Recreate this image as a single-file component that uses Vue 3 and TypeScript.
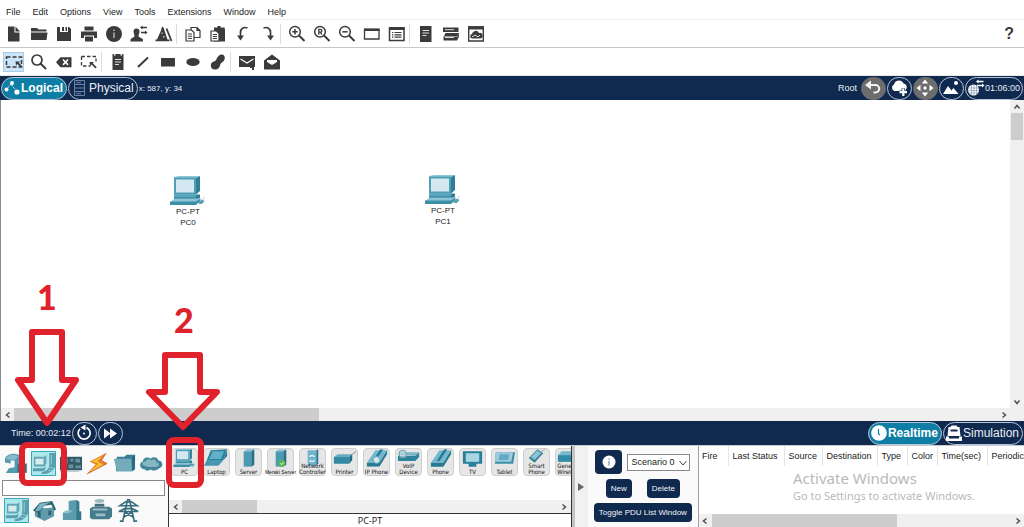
<script setup lang="ts">
import { ref } from 'vue'

interface Device {
  id: string
  icon: string
  lines: string[]
}

interface CanvasNode {
  name: string
  model: string
  x: number
  y: number
}

const menus: string[] = ['File', 'Edit', 'Options', 'View', 'Tools', 'Extensions', 'Window', 'Help']

const mainTools: string[][] = [
  ['new', 'open', 'save', 'print', 'info', 'user', 'wizard'],
  ['copy', 'paste', 'undo', 'redo'],
  ['zoom-in', 'zoom-reset', 'zoom-out', 'window', 'list'],
  ['server', 'devices', 'cloud-window'],
]

const drawTools: string[][] = [
  ['select', 'search', 'delete', 'resize'],
  ['note', 'line', 'rect', 'ellipse', 'freeform'],
  ['simple-pdu', 'complex-pdu'],
]

const nodes: CanvasNode[] = [
  { name: 'PC0', model: 'PC-PT', x: 169, y: 76 },
  { name: 'PC1', model: 'PC-PT', x: 424, y: 75 },
]

const categories: string[] = ['network', 'enddev', 'components', 'bolt', 'folder', 'cloud']
const subcategories: string[] = ['enddev', 'home', 'city', 'industrial', 'grid']

const devices: Device[] = [
  { id: 'pc', icon: 'pc', lines: ['PC'] },
  { id: 'laptop', icon: 'laptop', lines: ['Laptop'] },
  { id: 'server', icon: 'tower', lines: ['Server'] },
  { id: 'meraki', icon: 'meraki', lines: ['Meraki Server'] },
  { id: 'controller', icon: 'controller', lines: ['Network', 'Controller'] },
  { id: 'printer', icon: 'printer', lines: ['Printer'] },
  { id: 'ipphone', icon: 'ipphone', lines: ['IP Phone'] },
  { id: 'voip', icon: 'voip', lines: ['VoIP', 'Device'] },
  { id: 'phone', icon: 'phone', lines: ['Phone'] },
  { id: 'tv', icon: 'tv', lines: ['TV'] },
  { id: 'tablet', icon: 'tablet', lines: ['Tablet'] },
  { id: 'smart', icon: 'smart', lines: ['Smart', 'Phone'] },
  { id: 'generic', icon: 'generic', lines: ['Generic', 'Wireless'] },
]

const columns: { label: string; cls: string }[] = [
  { label: 'Fire', cls: 'c-fire' },
  { label: 'Last Status', cls: 'c-status' },
  { label: 'Source', cls: 'c-source' },
  { label: 'Destination', cls: 'c-dest' },
  { label: 'Type', cls: 'c-type' },
  { label: 'Color', cls: 'c-color' },
  { label: 'Time(sec)', cls: 'c-time' },
  { label: 'Periodic', cls: 'c-periodic' },
]

const drawTool = ref('select')
const query = ref('')
const scenario = ref('Scenario 0')
</script>

<template>
  <div class="app">
    <svg class="sprite" aria-hidden="true">
      <defs>
        <!-- toolbar glyphs -->
        <symbol id="new" viewBox="0 0 18 18"><path fill="currentColor" d="M3 1.500h6.500v6h5v9h-11.500zM10.500 1.500l4.500 5h-4.500z" /></symbol>
        <symbol id="open" viewBox="0 0 18 18"><path fill="currentColor" d="M1 3h6l1.500 1.500h8v2h-15.500zM1 7.500h16.500l-1 7.500h-15.500z" /></symbol>
        <symbol id="save" viewBox="0 0 18 18"><path fill="currentColor" d="M2 2h3v5h8v-5h1l2 2v12h-14z" /><path fill="currentColor" d="M7 2h2v4h-2zM10.500 2h1.500v4h-1.500z" /></symbol>
        <symbol id="print" viewBox="0 0 18 18"><path fill="currentColor" d="M4.500 1.500h9v4h-9zM1 6.500h16v6.500h-3v-2.500h-10v2.500h-3zM5 11.500h8v5h-8z" /></symbol>
        <symbol id="info" viewBox="0 0 18 18"><circle cx="9" cy="9" r="8" fill="currentColor" /><path fill="#aaa" d="M8.200 4.500h1.600v1.600h-1.600zM8.200 7.500h1.600v5.500h-1.600z" /></symbol>
        <symbol id="user" viewBox="0 0 18 18"><path fill="currentColor" d="M3.500 6.500a3 3 0 0 1 6 0c0 2-1 3-1 4.500 0 1.500 4 2 4.500 3.500v2h-12.500v-2c.5-1.500 4-2 4-3.500 0-1.500-1-2.500-1-4.500zM10 2.500l2.500-2v1.200h4.500v1.500h-4.500v1.200zM17.500 7.500l-2.500-2v1.200h-4v1.500h4v1.200z" /></symbol>
        <symbol id="wizard" viewBox="0 0 18 18"><path fill="currentColor" d="M7 1.500l1.500 1 1 3 3 9h2v1.800h-14v-1.800h1.500l4-9z" /><path stroke="currentColor" stroke-width="1.800" d="M11.500 3.500l5 12.500" /><path fill="#ccc" d="M6.500 7.500h1.200v1.400h-1.200zM8 11h1.500v1.500h-1.500z" /></symbol>
        <symbol id="copy" viewBox="0 0 18 18"><path fill="#fff" stroke="currentColor" stroke-width="1.200" d="M7 2.500h6l3 3v7h-9zM13 2.500v3h3" /><path fill="#fff" stroke="currentColor" stroke-width="1.200" d="M2 5h5.500l2.500 2.500v8.500h-8z" /><path stroke="currentColor" d="M3.800 9h4.200M3.800 11.200h4.200M3.800 13.400h4.200" /></symbol>
        <symbol id="paste" viewBox="0 0 18 18"><path fill="currentColor" d="M5 2.500h3.500v-1.500h3v1.500h4l.5 2v12h-11z" /><path fill="#fff" stroke="currentColor" stroke-width="1.200" d="M2 6h5.500l2.500 2.500v7.500h-8z" /><path stroke="currentColor" d="M3.800 9.500h4.200M3.800 11.500h4.200M3.800 13.500h4.200" /></symbol>
        <symbol id="undo" viewBox="0 0 18 18"><path fill="none" stroke="currentColor" stroke-width="1.700" d="M13.500 3c-4-1.500-7 .5-7 4.500v5" /><path fill="currentColor" d="M3 10.500h7l-3.500 5z" /></symbol>
        <symbol id="redo" viewBox="0 0 18 18"><path fill="none" stroke="currentColor" stroke-width="1.700" d="M4.500 3c4-1.500 7 .5 7 4.500v5" /><path fill="currentColor" d="M8 10.500h7l-3.500 5z" /></symbol>
        <symbol id="lens" viewBox="0 0 18 18"><circle cx="7" cy="6.800" r="5.300" fill="none" stroke="currentColor" stroke-width="1.500" /><path stroke="currentColor" stroke-width="1.900" d="M11 10.500l5.500 5.500" /></symbol>
        <symbol id="zoom-in" viewBox="0 0 18 18"><use href="#lens" /><path stroke="currentColor" stroke-width="1.500" d="M4.300 6.800h5.400M7 4.100v5.400" /></symbol>
        <symbol id="zoom-reset" viewBox="0 0 18 18"><use href="#lens" /><path fill="none" stroke="currentColor" stroke-width="1.300" d="M5.800 9.800v-5.500h1.700a1.300 1.300 0 0 1 0 2.800h-1.700M7.300 7l1.500 2.600" /></symbol>
        <symbol id="zoom-out" viewBox="0 0 18 18"><use href="#lens" /><path stroke="currentColor" stroke-width="1.500" d="M4.300 6.800h5.400" /></symbol>
        <symbol id="window" viewBox="0 0 18 18"><path fill="none" stroke="currentColor" stroke-width="1.300" d="M1.500 4.500h14.500v9.500h-14.500z" /><path fill="currentColor" d="M1 3.500h15.500v2.500h-15.500z" /></symbol>
        <symbol id="list" viewBox="0 0 18 18"><path fill="none" stroke="currentColor" stroke-width="1.500" d="M1.500 3h14.500v12.500h-14.500z" /><path fill="currentColor" d="M1 2h15.500v3h-15.500z" /><path stroke="currentColor" stroke-width="1.200" d="M4 7.500h1.300M6.500 7.500h7M4 9.800h1.300M6.500 9.800h7M4 12.100h1.300M6.500 12.100h7" /></symbol>
        <symbol id="server" viewBox="0 0 18 18"><path fill="currentColor" d="M3 1h11.500v16h-11.500z" /><path stroke="#ddd" stroke-width="1.200" d="M5.500 5.500h6.500M5.500 8h6.500M5.500 10.500h4" /></symbol>
        <symbol id="devices" viewBox="0 0 18 18"><path fill="currentColor" d="M1 2.500h15.500v4.500h-15.500zM3.500 8h13.500l-1.500 3h-13.500zM1.500 11.500h14l1.500-3v3l-2 4h-13.500z" /><path stroke="#ddd" d="M3 4.700h9M3 12.500h9" /></symbol>
        <symbol id="cloud-window" viewBox="0 0 18 18"><path fill="none" stroke="currentColor" stroke-width="1.400" d="M1.700 2h14.600v14h-14.600z" /><path fill="currentColor" d="M1 1.300h16v3.200h-16zM5 13.500a2.300 2.300 0 0 1 0-4.500 3.700 3.700 0 0 1 7-1 2.800 2.800 0 0 1 1.500 5.500z" /><path fill="none" stroke="#ddd" d="M5 12l3-2 3 2 2-2" /></symbol>
        <symbol id="select" viewBox="0 0 18 18"><path fill="none" stroke="currentColor" stroke-width="1.500" stroke-dasharray="4 2" d="M1.500 4h15v10h-15z" /><path fill="currentColor" d="M10.500 8.500h4.500l-1.300 1.300 3 3-1.200 1.200-3-3-1.500 1.500z" /></symbol>
        <symbol id="search" viewBox="0 0 18 18"><circle cx="7" cy="7" r="5" fill="none" stroke="currentColor" stroke-width="1.700" /><path stroke="currentColor" stroke-width="2" d="M10.500 10.500l5.500 5.500" /></symbol>
        <symbol id="delete" viewBox="0 0 18 18"><path fill="currentColor" d="M1 9.200l4.500-5h11v10h-11z" /><path stroke="#fff" stroke-width="1.600" d="M8 6.500l5 5.400M13 6.500l-5 5.400" /></symbol>
        <symbol id="resize" viewBox="0 0 18 18"><path fill="none" stroke="currentColor" stroke-width="1.300" stroke-dasharray="3.500 2" d="M1.500 3.500h14.500v5M1.500 3.500v9.500h9" /><path fill="currentColor" d="M9.500 9h4.500l-1.300 1.300 4 4-1.200 1.200-4-4-1.500 1.500z" /></symbol>
        <symbol id="note" viewBox="0 0 18 18"><path fill="currentColor" d="M3.500 1h1.500v1.500h1.500v-1.500h5v1.500h1.500v-1.500h1.500v16h-11z" /><path stroke="#ddd" stroke-width="1.200" d="M6 6.500h6M6 9h6M6 11.500h4" /></symbol>
        <symbol id="line" viewBox="0 0 18 18"><path stroke="currentColor" stroke-width="2" d="M4 14l10-9.500" /></symbol>
        <symbol id="rect" viewBox="0 0 18 18"><path fill="currentColor" d="M2 5h14v8.500h-14z" /></symbol>
        <symbol id="ellipse" viewBox="0 0 18 18"><ellipse cx="9" cy="9" rx="6.700" ry="4" fill="currentColor" /></symbol>
        <symbol id="freeform" viewBox="0 0 18 18"><path fill="currentColor" d="M10 2.500c3-2.500 7 0 5.500 4-1 2.500-3 2.500-4 4.500-1 4-3 6-6 5.500-3.500-.5-4.500-4-3-6.500 1.500-2 3.500-1 4.500-3 1-1.500 1.500-3.500 3-4.500z" /></symbol>
        <symbol id="simple-pdu" viewBox="0 0 18 18"><path fill="currentColor" d="M1 3h16v11h-1v3h-2v-2h-2v-1h-11z" /><path fill="none" stroke="#fff" stroke-width="1.200" d="M2.500 6l6.500 4 6.500-4" /></symbol>
        <symbol id="complex-pdu" viewBox="0 0 18 18"><path fill="currentColor" d="M1 7.500l8-6 8 6v9h-16z" /><path fill="#fff" d="M4 7h10v2l-5 3-5-3z" /></symbol>

        <!-- white glyphs of the dark bars -->
        <symbol id="topology" viewBox="0 0 18 18"><path fill="none" stroke="#fff" stroke-dasharray="1.500 1.500" d="M3 11l5-6 6 8" /><circle cx="3.500" cy="10.500" r="2" fill="#fff" /><circle cx="9" cy="4" r="2" fill="#fff" /><circle cx="14" cy="13" r="2.600" fill="#fff" /></symbol>
        <symbol id="rack" viewBox="0 0 14 18"><path fill="none" stroke="#6d83a6" d="M1.500 1.500h10v15h-10zM1.500 5.500h10M1.500 9h10M1.500 12.500h10" /><path stroke="#526d94" stroke-width="1.500" d="M3 3.500h5M3 14.500h5" /></symbol>
        <symbol id="back" viewBox="0 0 18 18"><path fill="none" stroke="#f2f2f2" stroke-width="2" d="M5 6h6.500a3.600 3.600 0 0 1 0 7.500h-2" /><path fill="#f2f2f2" d="M1 6l6-4.500v9z" /></symbol>
        <symbol id="cloud-add" viewBox="0 0 18 18"><path fill="#fff" d="M4.500 12a3.500 3.500 0 0 1-.5-6.500 5 5 0 0 1 9.500-1 3.700 3.700 0 0 1 2 6.500v1z" /><path stroke="#112a51" stroke-width="3.400" d="M13.300 9.300v8M9.500 13.200h8" /><path stroke="#fff" stroke-width="2.200" d="M13.300 9.500v7.500M9.500 13.200h7.500" /></symbol>
        <symbol id="move" viewBox="0 0 18 18"><path fill="#fff" d="M9 .5l3.200 4h-6.400zM9 17.500l3.200-4h-6.400zM.5 9l4-3.200v6.400zM17.500 9l-4-3.200v6.400z" /><circle cx="9" cy="9" r="1.700" fill="#fff" /></symbol>
        <symbol id="mountains" viewBox="0 0 18 18"><path fill="#fff" d="M1 15l5-8 3.500 4.500 2-2.500 5 6z" /><circle cx="14" cy="4" r="2" fill="#fff" /></symbol>
        <symbol id="globe" viewBox="0 0 18 18"><circle cx="6.500" cy="11" r="5.500" fill="#fff" /><path fill="none" stroke="#7a8ba6" stroke-width=".6" d="M1 9h11M1 11.500h11M2 14h9M4.500 6v10M7 6v10M9.500 6v10" /><path fill="#fff" d="M9 2.500l2.500-2v1.200h5v1.500h-5v1.300zM17.500 6.500l-2.500-2v1.200h-5v1.500h5v1.300z" /></symbol>
        <symbol id="reset" viewBox="0 0 18 18"><path fill="none" stroke="#fff" stroke-width="1.700" d="M11.500 3.600a6 6 0 1 1-6.500 1.200" /><path fill="#fff" d="M5.500 3.600l5-3.100v6z" /><circle cx="9" cy="9.500" r="1" fill="#fff" /></symbol>
        <symbol id="forward" viewBox="0 0 18 18"><path fill="#fff" d="M3 4.500l6 4.500v-4.500l7 5-7 5v-4.500l-6 4.500z" /></symbol>
        <symbol id="clock" viewBox="0 0 18 18"><circle cx="9" cy="9" r="7.800" fill="#fff" /><path fill="none" stroke="#1280a6" stroke-width="1.200" d="M8.500 5v5l1.500 1" /></symbol>
        <symbol id="sim" viewBox="0 0 18 18"><path fill="#fff" d="M6.500 1.500h5l1 1.500h2l1 9h-13l1-9h2zM1 12.500h3v2h10v-2h3v4.500h-16z" /><path fill="#112a51" d="M5.500 5.500h7v2h-7z" /></symbol>
        <symbol id="info-white" viewBox="0 0 14 14"><circle cx="7" cy="7" r="6.500" fill="#fff" /><path fill="#8c9bb3" d="M6.300 3.500h1.400v1.400h-1.400zM6.300 6h1.400v4.500h-1.400z" /></symbol>

        <!-- device pictures -->
        <symbol id="pc" viewBox="0 0 36 29"><path fill="#8fc7d7" d="M4 1l5-1h21l-4 2h-22z" /><path fill="#2f7f97" d="M26 2l4-2v15l-4 3.500z" /><path fill="#4fa0b7" d="M4 1.500h22v17h-22z" /><path fill="#d3e8f0" d="M6 3.500h18v13h-18z" /><path fill="#2f7f97" d="M4 18.500h26v3.500l-4 2h-22z" /><path fill="#5aa7bd" d="M4 18.500h22v3h-22z" /><path fill="#8dc3d3" d="M4.500 22.500h26l-4.500 4h-26z" /><path fill="#3d8fa8" d="M0 25.500h26l4.500-3v2.500l-4.500 4h-26z" /><path fill="#5c9fb3" d="M29 26l3-2.500 2.500 1.500-2.500 3h-3z" /><path fill="none" stroke="#c5cdd1" stroke-width=".8" d="M33 24l1.500-3.500" /></symbol>
        <symbol id="laptop" viewBox="0 0 26 18"><path fill="#2b829c" d="M7 1l17-1-4 11h-17z" /><path fill="#62b0c8" d="M9 2h12l-3.500 8h-12z" /><path fill="#4698b1" d="M3 11h17l-5 6h-15z" /><path fill="#257189" d="M20 11l4-10v6l-9 10z" /></symbol>
        <symbol id="tower" viewBox="0 0 26 18"><path fill="#4a9ab2" d="M8 2h8v16h-8z" /><path fill="#86c2d4" d="M8 2l3-2h8l-3 2z" /><path fill="#266f86" d="M16 2l3-2v16l-3 2z" /></symbol>
        <symbol id="meraki" viewBox="0 0 26 18"><use href="#tower" /><circle cx="14.500" cy="14.500" r="3.500" fill="#5ab84b" /><path fill="none" stroke="#fff" d="M12.800 14.500l1.400 1.400 2.200-2.400" /></symbol>
        <symbol id="controller" viewBox="0 0 26 18"><path fill="#6fb4c9" d="M8 1h9v16h-9z" /><path fill="#287690" d="M17 1l2-1v15l-2 2z" /><path fill="none" stroke="#e5f3f7" stroke-width="1.500" d="M10 8a2.700 2.700 0 0 1 5 0M15 11a2.700 2.700 0 0 1-5 0" /></symbol>
        <symbol id="printer" viewBox="0 0 26 18"><path fill="#65acc2" d="M2 8l4-3h15l-3 3z" /><path fill="#348aa4" d="M2 8h16v7h-16z" /><path fill="#206b83" d="M18 8l3-3v6l-3 4z" /><path stroke="#777" stroke-width=".8" d="M19 7l6-5" /></symbol>
        <symbol id="phone" viewBox="0 0 26 18"><path fill="#73b8cc" d="M3 14l9-13h12l-8 13z" /><path fill="#277a94" d="M3 14h13l8-13v4l-8 13h-13zM9 12l8-12h3l-8 12z" /></symbol>
        <symbol id="ipphone" viewBox="0 0 26 18"><use href="#phone" /><circle cx="13" cy="11" r="3.500" fill="#d2e6ed" stroke="#579db2" stroke-width=".8" /></symbol>
        <symbol id="voip" viewBox="0 0 26 18"><path fill="#79b8ca" d="M2 6l4-3h18l-4 4z" /><path fill="#2d839c" d="M2 7h18l4-4v5l-4 4h-18z" /><circle cx="7" cy="5" r="4" fill="#bbd6df" fill-opacity=".7" stroke="#5e99aa" /></symbol>
        <symbol id="tv" viewBox="0 0 26 18"><path fill="#287f9a" d="M3 2h20v13h-20zM9 15h8v3h-8z" /><path fill="#a8d5e3" d="M6 4h14v9h-14z" /></symbol>
        <symbol id="tablet" viewBox="0 0 26 18"><path fill="#3b8fa9" d="M4 3h20l-2 12h-19z" /><path fill="#9bcbdc" d="M4 3h18l-2 10h-17z" /><path fill="#62aac3" d="M8 5h10l-1 6h-10z" /></symbol>
        <symbol id="smart" viewBox="0 0 26 18"><path fill="#318199" d="M5 9l9-9 6 4-9 10z" /><path fill="#8bc1d1" d="M7 8l7-7 4 3-7 7z" /><path stroke="#aaa" d="M18 2l4-2" /></symbol>
        <symbol id="generic" viewBox="0 0 26 18"><path fill="#74b9cd" d="M2 6l4-4h20v4z" /><path fill="#318ba7" d="M2 6h24v7h-24z" /></symbol>

        <!-- category pictures -->
        <symbol id="network" viewBox="0 0 26 26"><path fill="#539bb0" d="M1 8c2-6 13-7 17-2v7h6v10h-22l3-5 6-1v-7h-4v3l-6-1z" /><path fill="#86bccc" d="M2 8c3-5 10-5 13-2l-4 3h-6z" /><path fill="#316f84" d="M14 14h9v8h-9z" /></symbol>
        <symbol id="enddev" viewBox="0 0 26 26"><path fill="#aee8ec" stroke="#2ba6b4" d="M.5 .5h25v25h-25z" /><path fill="#65a5b6" d="M3 6h11l2-2v9l-2 3h-11z" /><path fill="#d5edf1" d="M4.500 8h8.500v6h-8.500z" /><path fill="#5b9dae" d="M2 18h11l2-2v3l-2 2h-11zM19 2h6v14c-3 6-7 8-14 8v-2c6-1 8-4 8-8z" /><path fill="none" stroke="#9dd3dc" d="M18 20l4 1M19 17l4 1M21 4v10" /></symbol>
        <symbol id="components" viewBox="0 0 26 26"><path fill="#335764" d="M2 6h23v14h-23z" /><path fill="#64929f" d="M4 8h6v5h-6zM13 8h3v3h-3zM18 8h5v4h-5zM11 14h5v4h-5zM18 15h6v3h-6z" /><path stroke="#9ab9c0" d="M4 16h5M2 21h20" /></symbol>
        <symbol id="bolt" viewBox="0 0 26 26"><path fill="#ef7d25" d="M22 2l-17 9 6 3-9 10 21-11-6-3z" /><path fill="#f4c531" d="M18 5l-11 6 7 2-9 9 14-8-6-3z" /><path fill="none" stroke="#b64726" stroke-width=".7" d="M22 2l-5 8 6 3-21 11" /></symbol>
        <symbol id="folder" viewBox="0 0 26 26"><path fill="#367f94" d="M5 6h8l2-2h9v15l-3 2h-17z" /><path fill="#73abba" d="M2 8h18l1 13h-16z" /><path fill="#22677e" d="M21 7l3-3-1 15-2 2z" /></symbol>
        <symbol id="cloud" viewBox="0 0 26 26"><path fill="#42869a" d="M6 19c-6 0-6-7-2-8 0-5 6-5 8-3 3-3 8-1 8 2 5 0 6 7 1 8-3 3-8 3-9 1-2 2-5 2-6 0z" /><path fill="#86b7c4" d="M5 15c-3-2-1-4 2-4 1-3 4-3 5-1 3-2 6-1 6 2 3 0 4 3 1 4-4 1-10 1-14-1z" /></symbol>
        <symbol id="home" viewBox="0 0 26 26"><path fill="#5f9bab" d="M3 13l4-2 16-1v9l-10 5-10-5z" /><path fill="#2f6476" d="M1 13l7-8 13-2 4 9-2 1-3-6-7 1-6 8zM6 14h3v6h-3zM17 13h3v5h-3z" /><path fill="#7fb4c2" d="M8 6l12-2-6 3-6 6-5 1z" /></symbol>
        <symbol id="city" viewBox="0 0 26 26"><path fill="#5b9bad" d="M9 3l8-1 3 2v10h2v9h-19v-8h6z" /><path fill="#34798d" d="M17 2l3 2v10h2v9h-5z" /><path fill="#8ebeca" d="M3 15l3-2h7l-2 2z" /></symbol>
        <symbol id="industrial" viewBox="0 0 26 26"><path fill="#447b8b" d="M2 11l3-2h17l3 2v8l-3 3h-18l-2-2z" /><path fill="#9dbdc5" d="M5 11h15v2h-15zM8 16h10v3h-10z" /><ellipse cx="12" cy="3" rx="5" ry="2" fill="#9bb9c0" /><path fill="#426e7b" d="M7 6h10v3h-10z" /></symbol>
        <symbol id="grid" viewBox="0 0 26 26"><path fill="none" stroke="#386d7e" stroke-width="1.700" d="M7 24l5-22h2l5 22M4 8h18l-6-4h-6zM3 14h20l-6-3h-8zM8 20l9-6M18 20l-9-6M4 24h4M18 24h4" /></symbol>

        <!-- scroll arrows -->
        <symbol id="left" viewBox="0 0 8 8"><path fill="none" stroke="#505050" stroke-width="1.500" d="M5.500 1.500l-3 2.500 3 2.500" /></symbol>
        <symbol id="right" viewBox="0 0 8 8"><path fill="none" stroke="#505050" stroke-width="1.500" d="M2.500 1.500l3 2.500-3 2.500" /></symbol>
        <symbol id="up" viewBox="0 0 8 8"><path fill="none" stroke="#505050" stroke-width="1.500" d="M1.500 5.500l2.500-3 2.500 3" /></symbol>
        <symbol id="down" viewBox="0 0 8 8"><path fill="none" stroke="#505050" stroke-width="1.500" d="M1.500 2.500l2.500 3 2.500-3" /></symbol>
      </defs>
    </svg>

    <nav class="menubar" aria-label="Menu">
      <button v-for="m in menus" :key="m" type="button" class="menu">{{ m }}</button>
    </nav>

    <div class="toolbar" role="toolbar" aria-label="Main">
      <div v-for="(group, gi) in mainTools" :key="gi" class="group">
        <button v-for="t in group" :key="t" type="button" class="tool" :aria-label="t">
          <svg class="glyph"><use :href="'#' + t" /></svg>
        </button>
      </div>
      <button type="button" class="help" aria-label="Help contents">?</button>
    </div>

    <div class="toolbar draw" role="toolbar" aria-label="Drawing">
      <div v-for="(group, gi) in drawTools" :key="gi" class="group">
        <button
          v-for="t in group"
          :key="t"
          type="button"
          class="tool"
          :class="{ active: t === drawTool }"
          :aria-label="t"
          @click="drawTool = t"
        >
          <svg class="glyph"><use :href="'#' + t" /></svg>
        </button>
      </div>
    </div>

    <header class="bar">
      <button type="button" class="pill on"><svg class="glyph"><use href="#topology" /></svg>Logical</button>
      <button type="button" class="pill"><svg class="rack"><use href="#rack" /></svg>Physical</button>
      <span class="coords">x: 587, y: 34</span>
      <span class="spacer"></span>
      <span class="root">Root</span>
      <button type="button" class="round gray" aria-label="Back"><svg class="glyph"><use href="#back" /></svg></button>
      <button type="button" class="round" aria-label="New cluster"><svg class="glyph"><use href="#cloud-add" /></svg></button>
      <button type="button" class="round gray" aria-label="Move object"><svg class="glyph"><use href="#move" /></svg></button>
      <button type="button" class="round" aria-label="Background"><svg class="glyph"><use href="#mountains" /></svg></button>
      <button type="button" class="pill clock"><svg class="glyph"><use href="#globe" /></svg>01:06:00</button>
    </header>

    <main class="workspace">
      <div class="canvas">
        <div v-for="n in nodes" :key="n.name" class="node" :style="{ left: n.x + 'px', top: n.y + 'px' }">
          <svg class="node-pic"><use href="#pc" /></svg>
          <span>{{ n.model }}</span>
          <span>{{ n.name }}</span>
        </div>
      </div>
      <div class="vscroll">
        <button type="button" class="arrow" aria-label="Scroll up"><svg><use href="#up" /></svg></button>
        <div class="track"><div class="thumb"></div></div>
        <button type="button" class="arrow" aria-label="Scroll down"><svg><use href="#down" /></svg></button>
      </div>
      <div class="hscroll">
        <button type="button" class="arrow" aria-label="Scroll left"><svg><use href="#left" /></svg></button>
        <div class="track"><div class="thumb wide"></div></div>
        <button type="button" class="arrow" aria-label="Scroll right"><svg><use href="#right" /></svg></button>
      </div>
      <div class="corner"></div>
    </main>

    <div class="bar time-bar">
      <span class="time">Time: 00:02:12</span>
      <button type="button" class="round" aria-label="Power cycle devices"><svg class="glyph"><use href="#reset" /></svg></button>
      <button type="button" class="round" aria-label="Fast forward"><svg class="glyph"><use href="#forward" /></svg></button>
      <span class="spacer"></span>
      <button type="button" class="pill on"><svg class="glyph"><use href="#clock" /></svg>Realtime</button>
      <button type="button" class="pill"><svg class="glyph"><use href="#sim" /></svg>Simulation</button>
    </div>

    <footer class="bottom">
      <section class="palette">
        <div class="cats">
          <button v-for="c in categories" :key="c" type="button" class="cat" :aria-label="c"><svg><use :href="'#' + c" /></svg></button>
        </div>
        <input v-model="query" class="filter" type="text" aria-label="Search devices" />
        <div class="cats sub">
          <button v-for="c in subcategories" :key="c" type="button" class="cat" :aria-label="c"><svg><use :href="'#' + c" /></svg></button>
        </div>
      </section>

      <section class="models">
        <div class="model-row">
          <button v-for="d in devices" :key="d.id" type="button" class="model" :class="d.id">
            <svg class="model-pic"><use :href="'#' + d.icon" /></svg>
            <span class="model-name"><span v-for="l in d.lines" :key="l">{{ l }}</span></span>
          </button>
        </div>
        <div class="hscroll">
          <button type="button" class="arrow" aria-label="Scroll left"><svg><use href="#left" /></svg></button>
          <div class="track"><div class="thumb models-thumb"></div></div>
          <button type="button" class="arrow" aria-label="Scroll right"><svg><use href="#right" /></svg></button>
        </div>
        <div class="model-title">PC-PT</div>
      </section>

      <button type="button" class="splitter" aria-label="Collapse panel"><svg viewBox="0 0 8 8"><path d="M1 0l6 4-6 4z" fill="#666" /></svg></button>

      <section class="scenario">
        <div class="row">
          <button type="button" class="dark info-btn" aria-label="Scenario information"><svg><use href="#info-white" /></svg></button>
          <span class="select-wrap">
            <select v-model="scenario" aria-label="Scenario"><option>Scenario 0</option></select>
            <svg class="chevron" viewBox="0 0 8 8"><path fill="none" stroke="#444" d="M.5 2l3.500 4 3.500-4" /></svg>
          </span>
        </div>
        <div class="row actions">
          <button type="button" class="dark">New</button>
          <button type="button" class="dark">Delete</button>
        </div>
        <button type="button" class="dark toggle">Toggle PDU List Window</button>
      </section>

      <section class="pdus">
        <table>
          <thead>
            <tr><th v-for="c in columns" :key="c.label" :class="c.cls" scope="col">{{ c.label }}</th></tr>
          </thead>
        </table>
        <div class="watermark">
          <p class="wm-title">Activate Windows</p>
          <p class="wm-sub">Go to Settings to activate Windows.</p>
        </div>
        <div class="hscroll">
          <button type="button" class="arrow" aria-label="Scroll left"><svg><use href="#left" /></svg></button>
          <div class="track"><div class="thumb pdu-thumb"></div></div>
          <button type="button" class="arrow" aria-label="Scroll right"><svg><use href="#right" /></svg></button>
        </div>
      </section>
    </footer>

    <svg class="notes" viewBox="0 277 220 250">
      <g fill="none" stroke="#e0222c" stroke-width="6" stroke-linejoin="round">
        <path d="M32 332h30v48h14l-29 43-29-43h14z" />
        <path d="M165 355h35v37h17l-34 35-34-35h16z" />
        <rect x="22" y="445" width="42" height="38" rx="5" />
        <rect x="169" y="440" width="32" height="45" rx="5" />
      </g>
      <text x="37" y="310">1</text>
      <text x="174" y="333">2</text>
    </svg>
  </div>
</template>

<style>
body {
  margin: 0;
  overflow: hidden;
}
</style>

<style scoped>
.app {
  position: relative;
  display: flex;
  flex-direction: column;
  height: 100vh;
  overflow: hidden;
  background: #fff;
  color: #222;
  font-family: 'Liberation Sans', Arial, sans-serif;
  font-size: 9px;
  line-height: 11px;
}
.app * {
  box-sizing: border-box;
}
.sprite {
  position: absolute;
  width: 0;
  height: 0;
}
button {
  margin: 0;
  padding: 0;
  border: 0;
  background: none;
  color: inherit;
  font: inherit;
  white-space: nowrap;
}
svg {
  display: block;
  flex: none;
}
.menubar {
  display: flex;
  align-items: flex-end;
  gap: 12px;
  height: 20px;
  padding: 0 6px 1px;
  border-bottom: 1px solid #f0f0f0;
}
.toolbar {
  display: flex;
  align-items: center;
  height: 28px;
  padding-left: 1px;
  border-bottom: 1px solid #c8c8c8;
  color: #3b3b3b;
}
.toolbar.draw {
  border-bottom-color: #e8e8e8;
}
.group {
  display: flex;
}
.group + .group {
  padding-left: 3px;
  border-left: 1px solid #dcdcdc;
}
.tool {
  display: flex;
  align-items: center;
  justify-content: center;
  width: 25px;
  height: 20px;
}
.tool.active {
  background: #cce4f7;
  outline: 1px solid #a5cdec;
  outline-offset: -1px;
  margin-left: 2px;
  margin-right: 2px;
  width: 21px;
}
.glyph {
  width: 18px;
  height: 18px;
}
.help {
  margin-left: auto;
  padding-right: 10px;
  font-size: 16px;
  font-weight: 700;
  line-height: 20px;
}
.bar {
  display: flex;
  align-items: center;
  gap: 1px;
  height: 24px;
  padding: 0 1px;
  background: #0f294f;
  color: #e9eef5;
}
.pill,
.round {
  display: flex;
  align-items: center;
  justify-content: center;
  height: 23px;
  border: 1px solid #b7c6da;
  border-radius: 12px;
}
.pill {
  padding: 0 3px 0 1px;
  font-size: 12px;
  line-height: 14px;
}
.pill.on {
  background: #0f7ea5;
  color: #fff;
  font-weight: 700;
}
.pill .rack {
  width: 14px;
  height: 18px;
  margin: 0 2px 0 3px;
}
.round {
  width: 25px;
}
.gray {
  border-color: #6d6d6d;
  background: #6d6d6d;
}
.clock {
  padding-right: 2px;
  font-size: 9px;
}
.spacer {
  flex: 1;
}
.coords {
  font-size: 8px;
}
.root {
  margin-right: 3px;
}
.time {
  margin-left: 10px;
}
.workspace {
  display: grid;
  grid-template: minmax(0, 1fr) 13px / minmax(0, 1fr) 14px;
  flex: 1;
  min-height: 0;
  border-left: 1px solid #8c8c8c;
}
.canvas {
  position: relative;
}
.node {
  position: absolute;
  display: flex;
  flex-direction: column;
  align-items: center;
  width: 36px;
  font-size: 8px;
}
.node-pic {
  width: 36px;
  height: 29px;
  margin-bottom: 1px;
}
.hscroll,
.vscroll {
  display: flex;
  background: #f0f0f0;
}
.vscroll {
  flex-direction: column;
}
.hscroll {
  height: 13px;
}
.arrow {
  display: flex;
  align-items: center;
  justify-content: center;
  width: 13px;
  height: 13px;
}
.arrow svg {
  width: 8px;
  height: 8px;
}
.track {
  flex: 1;
}
.thumb {
  width: 12px;
  height: 27px;
  margin-left: 1px;
  background: #cdcdcd;
}
.hscroll .thumb {
  height: 100%;
  margin-left: 0;
}
.hscroll .wide {
  width: 31%;
}
.corner {
  background: #f0f0f0;
}
.bottom {
  display: flex;
  height: 82px;
  border-top: 1px solid #c6c9ce;
  background: #fafafa;
}
.palette {
  display: flex;
  flex-direction: column;
  width: 168px;
  overflow: hidden;
}
.cats {
  display: flex;
  align-items: center;
  gap: 1px;
  height: 34px;
  padding-left: 4px;
}
.cats.sub {
  gap: 2px;
  height: 29px;
}
.cat {
  display: flex;
  width: 26px;
}
.cat svg {
  width: 25px;
  height: 25px;
}
.filter {
  height: 16px;
  margin: 0 3px 0 2px;
  padding: 0 3px;
  border: 1px solid #888;
  background: #fff;
  font: inherit;
}
.models {
  display: flex;
  flex-direction: column;
  flex: 403;
  min-width: 0;
  border-right: 1px solid #333;
  border-left: 1px solid #333;
  background: #fff;
}
.model-row {
  display: flex;
  flex: 1;
  align-items: flex-start;
  gap: 5px;
  padding: 2px 0 0 2px;
  overflow: hidden;
}
.model {
  display: flex;
  flex: none;
  flex-direction: column;
  align-items: center;
  justify-content: space-between;
  width: 27px;
  height: 28px;
  border: 1px solid #cfcfcf;
  border-radius: 4px;
  background: #e6e6e6;
}
.model-pic {
  width: 25px;
  height: 18px;
}
.model-name {
  display: flex;
  flex-direction: column;
  align-items: center;
  margin-top: -6px;
  color: #111;
  font-family: 'DejaVu Sans Condensed', 'DejaVu Sans', sans-serif;
  font-size: 6px;
  line-height: 6px;
}
.meraki .model-name {
  font-family: 'Liberation Sans', Arial, sans-serif;
  font-size: 5px;
}
.generic .model-name {
  align-items: flex-start;
}
.model-title {
  height: 14px;
  border-top: 1px solid #333;
  color: #111;
  font-family: 'Open Sans', sans-serif;
  font-size: 9px;
  line-height: 14px;
  text-align: center;
}
.hscroll .models-thumb {
  width: 20%;
}
.splitter {
  display: flex;
  align-items: center;
  justify-content: center;
  width: 16px;
  border-left: 3px solid #c4c4c4;
  background: #f1f1f1;
}
.splitter svg {
  width: 8px;
  height: 8px;
}
.scenario {
  display: flex;
  flex-direction: column;
  align-items: center;
  gap: 5px;
  width: 110px;
  padding-top: 4px;
}
.row {
  display: flex;
  align-items: center;
  gap: 5px;
}
.actions {
  gap: 15px;
}
.dark {
  height: 19px;
  padding: 0 5px;
  border-radius: 4px;
  background: #0f294f;
  color: #f2f5f9;
  font-size: 8px;
}
.info-btn {
  display: flex;
  align-items: center;
  justify-content: center;
  width: 27px;
  height: 24px;
}
.info-btn svg {
  width: 14px;
  height: 14px;
}
.select-wrap {
  position: relative;
  display: flex;
}
select {
  width: 63px;
  height: 17px;
  padding: 0 0 0 3px;
  border: 1px solid #8a8a8a;
  border-radius: 0;
  background: #fff;
  color: #222;
  font: inherit;
  appearance: none;
}
.chevron {
  position: absolute;
  top: 5px;
  right: 3px;
  width: 8px;
  height: 8px;
  pointer-events: none;
}
.pdus {
  position: relative;
  display: flex;
  flex-direction: column;
  justify-content: space-between;
  flex: 326;
  min-width: 0;
  border-left: 1px solid #a0a0a0;
  background: #fff;
  overflow: hidden;
}
table {
  width: 100%;
  border-collapse: collapse;
  table-layout: fixed;
}
th {
  height: 20px;
  padding: 0 0 0 3px;
  border-right: 1px solid #e4e4e4;
  font-weight: 400;
  text-align: left;
  white-space: nowrap;
  overflow: hidden;
}
.c-fire { width: 30px; }
.c-status { width: 56px; }
.c-source { width: 38px; }
.c-dest { width: 55px; }
.c-type { width: 30px; }
.c-color { width: 30px; }
.c-time { width: 50px; }
.c-periodic {
  border-right: 0;
}
.watermark {
  position: absolute;
  top: 22px;
  left: 94px;
  color: #b9b9b9;
  font-family: 'Noto Sans', 'Open Sans', sans-serif;
  white-space: nowrap;
}
.watermark p {
  margin: 0;
}
.wm-title {
  font-size: 15px;
  line-height: 20px;
}
.wm-sub {
  font-size: 11px;
  line-height: 16px;
}
.hscroll .pdu-thumb {
  width: 62%;
}
.notes {
  position: absolute;
  bottom: 0;
  left: 0;
  width: 220px;
  height: 250px;
  pointer-events: none;
}
.notes text {
  fill: #e0222c;
  font-family: Lato, sans-serif;
  font-size: 34px;
  font-weight: 900;
}
</style>
